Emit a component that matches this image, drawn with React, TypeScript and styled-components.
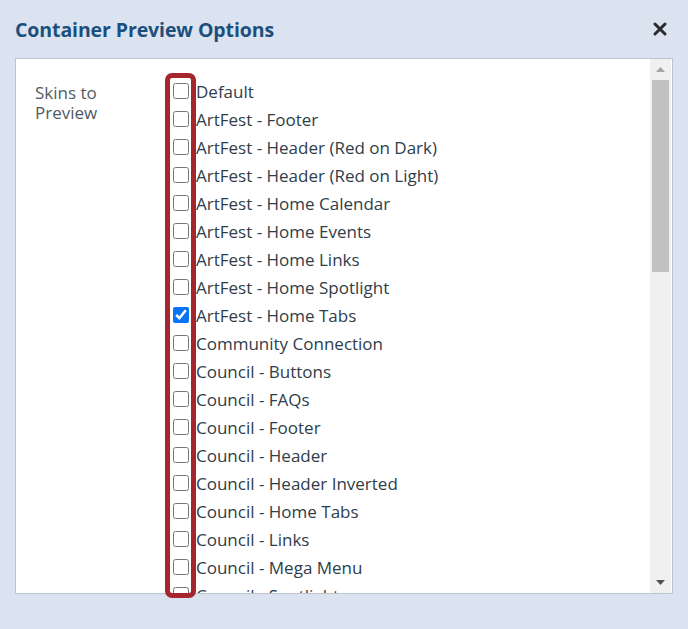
import styled, { createGlobalStyle } from 'styled-components';

const GlobalStyle = createGlobalStyle`
  html, body {
    margin: 0;
    padding: 0;
    background: #dae3ef;
    font-family: "Open Sans", "Noto Sans", sans-serif;
  }
  * { box-sizing: border-box; }
`;

const Modal = styled.div`
  width: 688px;
  height: 629px;
  display: flex;
  flex-direction: column;
`;

const Header = styled.div`
  display: flex;
  align-items: center;
  justify-content: space-between;
  height: 58px;
  padding: 0 21px 0 15px;
`;

const Title = styled.h1`
  margin: 0;
  font-size: 19.5px;
  font-weight: 700;
  color: #1d4f7e;
  letter-spacing: -0.1px;
`;

const CloseButton = styled.button`
  border: none;
  background: none;
  padding: 0;
  width: 14px;
  height: 14px;
  display: flex;
  cursor: pointer;
`;

const BodyWrap = styled.div`
  position: relative;
  margin: 0 15px;
`;

const Panel = styled.div`
  height: 536px;
  background: #fff;
  border: 1px solid #bcc5cf;
  display: flex;
`;

const Content = styled.div`
  flex: 1;
  overflow: hidden;
  display: grid;
  grid-template-columns: 137px 1fr;
  align-content: start;
  padding: 18px 0 0 19px;
`;

const ScrollBar = styled.div`
  width: 21px;
  background: #f0f0f0;
  display: flex;
  flex-direction: column;
  align-items: center;
  margin-right: 1px;
`;

const ScrollArrow = styled.div`
  height: 21px;
  width: 100%;
  display: flex;
  align-items: center;
  justify-content: center;
`;

const Track = styled.div`
  flex: 1;
  width: 100%;
  padding: 0 2px;
`;

const Thumb = styled.div`
  height: 192px;
  background: #c1c1c1;
`;

const FieldLabel = styled.div`
  font-size: 17px;
  line-height: 20px;
  color: #505a64;
  padding-top: 6px;
  padding-right: 40px;
`;

const List = styled.div`
  display: flex;
  flex-direction: column;
`;

const Row = styled.label`
  display: flex;
  align-items: center;
  gap: 7px;
  height: 28px;
  font-size: 17px;
  color: #2f3d4a;
  white-space: nowrap;
`;

const Check = styled.input`
  margin: 0 0 0 1px;
  width: 16px;
  height: 16px;
  accent-color: #0b74f5;
`;

const Highlight = styled.div`
  position: absolute;
  left: 150px;
  top: 15px;
  width: 31px;
  height: 525px;
  border: 5px solid #a6262e;
  border-radius: 7px;
  pointer-events: none;
`;

const skins = [
  'Default',
  'ArtFest - Footer',
  'ArtFest - Header (Red on Dark)',
  'ArtFest - Header (Red on Light)',
  'ArtFest - Home Calendar',
  'ArtFest - Home Events',
  'ArtFest - Home Links',
  'ArtFest - Home Spotlight',
  'ArtFest - Home Tabs',
  'Community Connection',
  'Council - Buttons',
  'Council - FAQs',
  'Council - Footer',
  'Council - Header',
  'Council - Header Inverted',
  'Council - Home Tabs',
  'Council - Links',
  'Council - Mega Menu',
  'Council - Spotlight',
];

const App = () => {
  return (
    <>
      <GlobalStyle />
      <Modal>
        <Header>
          <Title>Container Preview Options</Title>
          <CloseButton aria-label="Close">
            <svg width="14" height="14" viewBox="0 0 14 14">
              <path d="M2 2 L12 12 M12 2 L2 12" stroke="#2a2a2a" strokeWidth="3" strokeLinecap="round" />
            </svg>
          </CloseButton>
        </Header>
        <BodyWrap>
          <Panel>
            <Content>
              <FieldLabel>Skins to Preview</FieldLabel>
              <List>
                {skins.map((name) => (
                  <Row key={name}>
                    <Check type="checkbox" defaultChecked={name === 'ArtFest - Home Tabs'} />
                    {name}
                  </Row>
                ))}
              </List>
            </Content>
            <ScrollBar>
              <ScrollArrow>
                <svg width="9" height="5" viewBox="0 0 9 5">
                  <path d="M0 5 L4.5 0 L9 5 Z" fill="#a3a3a3" />
                </svg>
              </ScrollArrow>
              <Track>
                <Thumb />
              </Track>
              <ScrollArrow>
                <svg width="9" height="5" viewBox="0 0 9 5">
                  <path d="M0 0 L4.5 5 L9 0 Z" fill="#505050" />
                </svg>
              </ScrollArrow>
            </ScrollBar>
          </Panel>
          <Highlight />
        </BodyWrap>
      </Modal>
    </>
  );
};

export default App;
